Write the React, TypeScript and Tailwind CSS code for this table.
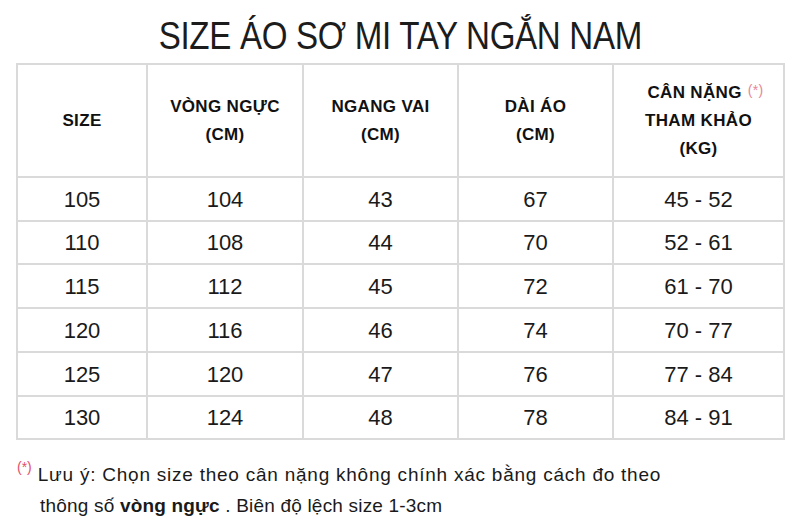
const rows = [
  ["105", "104", "43", "67", "45 - 52"],
  ["110", "108", "44", "70", "52 - 61"],
  ["115", "112", "45", "72", "61 - 70"],
  ["120", "116", "46", "74", "70 - 77"],
  ["125", "120", "47", "76", "77 - 84"],
  ["130", "124", "48", "78", "84 - 91"],
];

const rowHeights = ["h-[44px]", "h-[43px]", "h-[44px]", "h-[44px]", "h-[44px]", "h-[43px]"];

export default function App() {
  return (
    <div className="w-[800px] h-[526px] bg-white overflow-hidden font-['Liberation_Sans',Arial,sans-serif] text-[#1a1a1a]">
      <div className="h-[63px] flex items-center justify-center">
        <h1 className="text-[39px] leading-none font-normal text-[#1c1c1c] scale-x-[0.85] tracking-[-0.01em] mt-[7px]">
          SIZE ÁO SƠ MI TAY NGẮN NAM
        </h1>
      </div>

      <table className="ml-[16px] w-[767px] table-fixed border-collapse border-2 border-[#dadada]">
        <colgroup>
          <col className="w-[130px]" />
          <col className="w-[156px]" />
          <col className="w-[155px]" />
          <col className="w-[155px]" />
          <col className="w-[171px]" />
        </colgroup>
        <thead>
          <tr className="h-[113px] text-[17px] font-bold leading-[28px] tracking-[0.02em] text-[#111]">
            <th className="border-2 border-[#dadada] align-middle">SIZE</th>
            <th className="border-2 border-[#dadada] align-middle">
              VÒNG NGỰC
              <br />
              (CM)
            </th>
            <th className="border-2 border-[#dadada] align-middle">
              NGANG VAI
              <br />
              (CM)
            </th>
            <th className="border-2 border-[#dadada] align-middle">
              DÀI ÁO
              <br />
              (CM)
            </th>
            <th className="border-2 border-[#dadada] align-middle">
              <span className="ml-[14px]">CÂN NẶNG</span>
              <sup className="ml-[6px] text-[14px] font-normal text-[#e88596] relative top-[-3px]">(*)</sup>
              <br />
              THAM KHẢO
              <br />
              (KG)
            </th>
          </tr>
        </thead>
        <tbody>
          {rows.map((row, i) => (
            <tr key={row[0]} className={`${rowHeights[i]} text-[22px] text-center`}>
              {row.map((cell, j) => (
                <td key={j} className="border-2 border-[#dadada] align-middle p-0">
                  {cell}
                </td>
              ))}
            </tr>
          ))}
        </tbody>
      </table>

      <div className="mt-[20px] ml-[17px] text-[19px] leading-[30px] text-[#1a1a1a]">
        <p className="flex">
          <span className="text-[14px] leading-[18px] text-[#e2506a] mr-[6px] mt-[-2px]">(*)</span>
          <span className="tracking-[0.04em]">Lưu ý: Chọn size theo cân nặng không chính xác bằng cách đo theo</span>
        </p>
        <p className="ml-[23px] mt-[1px] tracking-[0.01em]">
          thông số <span className="font-bold">vòng ngực</span> . Biên độ lệch size 1-3cm
        </p>
      </div>
    </div>
  );
}
